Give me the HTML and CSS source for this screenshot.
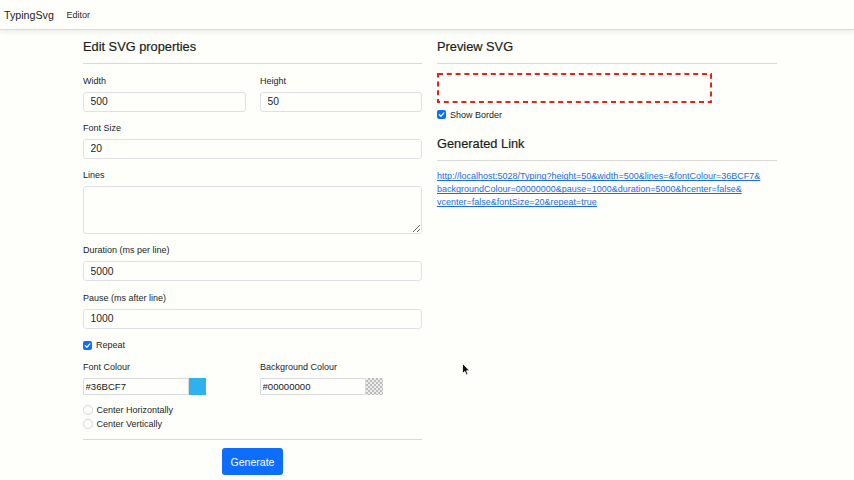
FILE: index.html
```html
<!DOCTYPE html>
<html lang="en">
<head>
<meta charset="utf-8">
<title>TypingSvg</title>
<link rel="stylesheet" href="styles.css">
</head>
<body>
<header class="navbar">
  <span class="brand">TypingSvg</span>
  <span class="nav-link">Editor</span>
</header>
<main class="container">
  <section class="col">
    <h2 class="title">Edit SVG properties</h2>
    <hr class="rule">
    <div class="row2">
      <div class="field">
        <label class="label">Width</label>
        <input class="input" type="text" value="500">
      </div>
      <div class="field">
        <label class="label">Height</label>
        <input class="input" type="text" value="50">
      </div>
    </div>
    <div class="field">
      <label class="label">Font Size</label>
      <input class="input" type="text" value="20">
    </div>
    <div class="field">
      <label class="label">Lines</label>
      <textarea class="input textarea"></textarea>
    </div>
    <div class="field">
      <label class="label">Duration (ms per line)</label>
      <input class="input" type="text" value="5000">
    </div>
    <div class="field">
      <label class="label">Pause (ms after line)</label>
      <input class="input" type="text" value="1000">
    </div>
    <div class="check-row repeat">
      <span class="checkbox"><svg width="9" height="9" viewBox="0 0 9 9"><path d="M2.2 4.6 L3.9 6.2 L6.9 2.9" fill="none" stroke="#fff" stroke-width="1.3" stroke-linecap="round" stroke-linejoin="round"/></svg></span>
      <span>Repeat</span>
    </div>
    <div class="row2 colours">
      <div class="colour-field">
        <label class="label colour-label">Font Colour</label>
        <div class="colour-input">
          <input class="colour-text" type="text" value="#36BCF7">
          <span class="swatch swatch-cyan"></span>
        </div>
      </div>
      <div class="colour-field">
        <label class="label colour-label">Background Colour</label>
        <div class="colour-input">
          <input class="colour-text" type="text" value="#00000000">
          <span class="swatch swatch-clear"></span>
        </div>
      </div>
    </div>
    <div class="check-row">
      <span class="radio"></span>
      <span>Center Horizontally</span>
    </div>
    <div class="check-row">
      <span class="radio"></span>
      <span>Center Vertically</span>
    </div>
    <hr class="rule rule-bottom">
    <div class="actions">
      <button class="btn" type="button">Generate</button>
    </div>
  </section>
  <section class="col">
    <h2 class="title">Preview SVG</h2>
    <hr class="rule">
    <svg class="preview" width="275" height="30" viewBox="0 0 275 30">
      <rect x="1" y="1" width="273" height="28" fill="none" stroke="#e3231c" stroke-width="2" stroke-dasharray="5 3.8"/>
    </svg>
    <div class="check-row show-border">
      <span class="checkbox"><svg width="9" height="9" viewBox="0 0 9 9"><path d="M2.2 4.6 L3.9 6.2 L6.9 2.9" fill="none" stroke="#fff" stroke-width="1.3" stroke-linecap="round" stroke-linejoin="round"/></svg></span>
      <span>Show Border</span>
    </div>
    <h2 class="title link-title">Generated Link</h2>
    <hr class="rule">
    <a class="gen-link" href="#">http://localhost:5028/Typing?height=50&amp;width=500&amp;lines=&amp;fontColour=36BCF7&amp;<br>backgroundColour=00000000&amp;pause=1000&amp;duration=5000&amp;hcenter=false&amp;<br>vcenter=false&amp;fontSize=20&amp;repeat=true</a>
  </section>
</main>
<svg class="cursor" width="9" height="13" viewBox="0 0 9 13">
  <path d="M0.5 0.5 L0.5 10.5 L2.8 8.4 L4.4 12 L6 11.3 L4.5 7.8 L7.6 7.8 Z" fill="#111" stroke="#fff" stroke-width="0.8" stroke-linejoin="round"/>
</svg>
</body>
</html>
```

FILE: styles.css
```css
html, body {
  margin: 0;
  padding: 0;
}

body {
  background: #fefefb;
  font-family: "Liberation Sans", Arial, sans-serif;
  font-size: 9px;
  color: #212529;
  position: relative;
  min-height: 480px;
}

.navbar {
  box-sizing: border-box;
  height: 30px;
  display: flex;
  align-items: center;
  padding-left: 4px;
  border-bottom: 1px solid #d9d9d9;
  box-shadow: 0 2px 5px rgba(0, 0, 0, 0.08);
}

.brand {
  font-size: 10.7px;
  margin-right: 12.5px;
  color: #1d1d1d;
}

.nav-link {
  font-size: 9px;
  color: #2a2a2a;
}

.container {
  display: grid;
  grid-template-columns: 339px 340px;
  column-gap: 15px;
  margin-left: 83px;
  padding-top: 9px;
}

.title {
  margin: 0;
  font-size: 12.8px;
  font-weight: 500;
  line-height: 16px;
  color: #1b1e21;
  -webkit-text-stroke: 0.2px #1b1e21;
}

.rule {
  border: 0;
  border-top: 1px solid #d8d8d6;
  margin: 8px 0 9.6px;
  height: 0;
}

.row2 {
  display: grid;
  grid-template-columns: 163px 162px;
  column-gap: 14px;
}

.field {
  margin-bottom: 9.4px;
}

.label {
  display: block;
  line-height: 14px;
  margin-bottom: 4px;
}

.input {
  display: block;
  box-sizing: border-box;
  width: 100%;
  height: 20px;
  margin: 0;
  padding: 0 6.5px;
  border: 1px solid #dfe1e6;
  border-radius: 3px;
  background: #fefefb;
  font-family: "Liberation Sans", Arial, sans-serif;
  font-size: 10.3px;
  color: #212529;
  outline: none;
}

.textarea {
  height: 47.5px;
  resize: vertical;
  padding-top: 4px;
}

.check-row {
  display: flex;
  align-items: center;
  gap: 4px;
  line-height: 14px;
}

.repeat {
  margin-bottom: 8.3px;
}

.checkbox {
  width: 9px;
  height: 9px;
  border-radius: 2px;
  background: #0d6efd;
  display: flex;
}

.radio {
  box-sizing: border-box;
  width: 9.5px;
  height: 9.5px;
  border-radius: 50%;
  border: 1px solid #d3d4d6;
  background: #fefefb;
}

.colours {
  margin-bottom: 8.3px;
}

.colour-label {
  margin-bottom: 3.4px;
}

.colour-input {
  display: flex;
  height: 17px;
}

.colour-text {
  box-sizing: border-box;
  width: 106px;
  height: 17px;
  margin: 0;
  padding: 0 1.5px;
  border: 1px solid #d9dade;
  border-radius: 1px;
  background: #fefefb;
  font-family: "Liberation Sans", Arial, sans-serif;
  font-size: 9.6px;
  color: #1a1a1a;
  outline: none;
}

.swatch {
  width: 17px;
  height: 17px;
}

.swatch-cyan {
  background: #2eb1ee;
}

.swatch-clear {
  background-color: #e6e6e6;
  background-image: conic-gradient(#bdbdbd 25%, #ececec 0 50%, #bdbdbd 0 75%, #ececec 0);
  background-size: 4px 4px;
}

.rule-bottom {
  margin: 8px 0 8.3px;
}

.actions {
  display: flex;
  justify-content: center;
}

.btn {
  height: 26.5px;
  padding: 0 9px;
  border: 0;
  border-radius: 3px;
  background: #0d6efd;
  color: #fff;
  font-family: "Liberation Sans", Arial, sans-serif;
  font-size: 10.5px;
}

.preview {
  display: block;
  margin-top: -1px;
  margin-bottom: 5.3px;
}

.link-title {
  margin-top: 14px;
}

.gen-link {
  display: block;
  margin-top: 0.4px;
  line-height: 13px;
  color: #1a6be6;
  text-decoration: underline;
  white-space: nowrap;
}

.cursor {
  position: absolute;
  left: 462px;
  top: 363px;
}
```
